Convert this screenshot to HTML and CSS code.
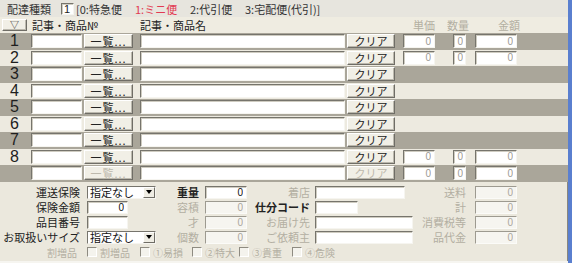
FILE: index.html
```html
<!DOCTYPE html>
<html lang="ja">

<head>
  <meta charset="UTF-8">
  <meta name="viewport" content="width=device-width, initial-scale=1.0">
  <title>配達明細</title>
  <link rel="stylesheet" href="styles.css">
</head>

<body>
  <div class="form">
    <!-- 配達種類 -->
    <div class="type-bar">
      <span class="type-label">配達種類</span>
      <input class="field type-input" value="1">
      <span class="type-opt w59">[0:特急便</span>
      <span class="type-opt w55 red">1:ミニ便</span>
      <span class="type-opt w55">2:代引便</span>
      <span class="type-opt">3:宅配便(代引)]</span>
    </div>

    <!-- 明細ヘッダ -->
    <div class="list-head">
      <button class="btn sort-btn">▽</button>
      <span class="col-code">記事・商品№</span>
      <span class="col-name">記事・商品名</span>
      <span class="col-price dim">単価</span>
      <span class="col-qty dim">数量</span>
      <span class="dim">金額</span>
    </div>

    <!-- 明細行 -->
    <div class="list">
      <div class="row dark">
        <span class="num">1</span>
        <input class="field code">
        <button class="btn btn-list">一覧...</button>
        <input class="field name">
        <button class="btn btn-clear">クリア</button>
        <input class="field zero price" value="0">
        <input class="field zero qty" value="0">
        <input class="field zero amount" value="0">
      </div>
      <div class="row">
        <span class="num">2</span>
        <input class="field code">
        <button class="btn btn-list">一覧...</button>
        <input class="field name">
        <button class="btn btn-clear">クリア</button>
        <input class="field zero price" value="0">
        <input class="field zero qty" value="0">
        <input class="field zero amount" value="0">
      </div>
      <div class="row dark">
        <span class="num">3</span>
        <input class="field code">
        <button class="btn btn-list">一覧...</button>
        <input class="field name">
        <button class="btn btn-clear">クリア</button>
      </div>
      <div class="row">
        <span class="num">4</span>
        <input class="field code">
        <button class="btn btn-list">一覧...</button>
        <input class="field name">
        <button class="btn btn-clear">クリア</button>
      </div>
      <div class="row dark">
        <span class="num">5</span>
        <input class="field code">
        <button class="btn btn-list">一覧...</button>
        <input class="field name">
        <button class="btn btn-clear">クリア</button>
      </div>
      <div class="row">
        <span class="num">6</span>
        <input class="field code">
        <button class="btn btn-list">一覧...</button>
        <input class="field name">
        <button class="btn btn-clear">クリア</button>
      </div>
      <div class="row dark">
        <span class="num">7</span>
        <input class="field code">
        <button class="btn btn-list">一覧...</button>
        <input class="field name">
        <button class="btn btn-clear">クリア</button>
      </div>
      <div class="row">
        <span class="num">8</span>
        <input class="field code">
        <button class="btn btn-list">一覧...</button>
        <input class="field name">
        <button class="btn btn-clear">クリア</button>
        <input class="field zero price" value="0">
        <input class="field zero qty" value="0">
        <input class="field zero amount" value="0">
      </div>
      <!-- 新規行 -->
      <div class="row dark">
        <span class="num"></span>
        <input class="field code">
        <button class="btn btn-list" disabled>一覧...</button>
        <input class="field name">
        <button class="btn btn-clear" disabled>クリア</button>
        <input class="field zero price" value="0">
        <input class="field zero qty" value="0">
        <input class="field zero amount" value="0">
      </div>
    </div>

    <!-- 集計・配送情報 -->
    <div class="summary">
      <span class="lbl">運送保険</span>
      <span class="ctl c1">
        <span class="select"><span class="select-text">指定なし</span><span class="select-arrow"></span></span>
      </span>
      <span class="lbl bold">重量</span>
      <span class="ctl c2"><input class="field sm w42 num-dark" value="0"></span>
      <span class="lbl dim">着店</span>
      <span class="ctl c3"><input class="field sm w90"></span>
      <span class="lbl dim">送料</span>
      <span class="ctl c4"><input class="field sm w42 off" value="0"></span>

      <span class="lbl">保険金額</span>
      <span class="ctl c1"><input class="field sm w41 num-dark" value="0"></span>
      <span class="lbl dim">容積</span>
      <span class="ctl c2"><input class="field sm w42 off" value="0"></span>
      <span class="lbl bold">仕分コード</span>
      <span class="ctl c3"><input class="field sm w43"></span>
      <span class="lbl dim">計</span>
      <span class="ctl c4"><input class="field sm w42 off" value="0"></span>

      <span class="lbl">品目番号</span>
      <span class="ctl c1"><input class="field sm w41"></span>
      <span class="lbl dim">才</span>
      <span class="ctl c2"><input class="field sm w42 off" value="0"></span>
      <span class="lbl dim">お届け先</span>
      <span class="ctl c3"><input class="field sm w98"></span>
      <span class="lbl dim">消費税等</span>
      <span class="ctl c4"><input class="field sm w42 off" value="0"></span>

      <span class="lbl">お取扱いサイズ</span>
      <span class="ctl c1">
        <span class="select"><span class="select-text">指定なし</span><span class="select-arrow"></span></span>
      </span>
      <span class="lbl dim">個数</span>
      <span class="ctl c2"><input class="field sm w42 off" value="0"></span>
      <span class="lbl dim">ご依頼主</span>
      <span class="ctl c3"><input class="field sm w98"></span>
      <span class="lbl dim">品代金</span>
      <span class="ctl c4"><input class="field sm w42 off" value="0"></span>

      <!-- 割増品チェック -->
      <div class="extras">
        <span class="extras-label">割増品</span>
        <label class="opt w53"><span class="check"></span>割増品</label>
        <label class="opt w52"><span class="check"></span>①易損</label>
        <label class="opt w47"><span class="check"></span>②特大</label>
        <label class="opt w53"><span class="check"></span>③貴重</label>
        <label class="opt"><span class="check"></span>④危険</label>
      </div>
    </div>
  </div>
</body>

</html>
```

FILE: styles.css
```css
/* Reset */
* {
  margin: 0;
  padding: 0;
  box-sizing: border-box;
}

:root {
  --row-dark: #aaa69a;
  --row-light: #edeae0;
  --panel: #ebe8dd;
  --dim-text: #b3afa2;
  --sunken-dark: #76746c;
  --sunken-light: #f6f5f0;
}

body {
  font-family: "Noto Sans CJK JP", "Noto Sans", sans-serif;
  font-size: 11px;
  color: #222;
  background: var(--panel);
  overflow: hidden;
}

/* Window frame */
.form {
  width: 572px;
  height: 263px;
  display: flex;
  flex-direction: column;
  background: var(--panel);
  border-right: 4px solid #5a7fcf;
  box-shadow: inset -1px 0 0 #8a877d;
  overflow: hidden;
}

.dim {
  color: var(--dim-text);
}

.bold {
  font-weight: bold;
}

/* Inputs and buttons */
.field {
  height: 14px;
  padding: 0 3px;
  border: 1px solid;
  border-color: var(--sunken-dark) var(--sunken-light) var(--sunken-light) var(--sunken-dark);
  box-shadow: inset 1px 1px 0 #cfccc1;
  background: #fff;
  font: 10px "Liberation Sans", sans-serif;
  color: #222;
  outline: none;
}

.btn {
  height: 14px;
  padding: 0;
  border: 1px solid;
  border-color: #fff #6f6d66 #6f6d66 #fff;
  box-shadow: inset -1px -1px 0 #bcb9ae;
  background: #f1efe6;
  font-family: "Noto Sans CJK JP", sans-serif;
  font-size: 11px;
  line-height: 12px;
  color: #222;
}

.btn:disabled {
  color: #bdb9ad;
}

/* Delivery type bar */
.type-bar {
  height: 17px;
  display: flex;
  align-items: center;
  padding-left: 7px;
  background: #e7e5de;
  color: #333;
}

.type-label {
  width: 54px;
}

.type-input {
  width: 13px;
  height: 12px;
  padding: 0 0 0 2px;
  margin-right: 2px;
  text-align: left;
  font-size: 11px;
}

.w59 { width: 59px; }
.w55 { width: 55px; }

.red {
  color: #e23a52;
}

/* List header */
.list-head {
  height: 16px;
  display: flex;
  align-items: center;
  background: #efece1;
}

.sort-btn {
  width: 25px;
  height: 12px;
  margin: 0 5px 0 2px;
  font-size: 9px;
  line-height: 10px;
}

.col-code { width: 108px; }
.col-name { width: 273px; }
.col-price { width: 34px; }
.col-qty { width: 51px; }

/* List rows */
.row {
  height: 16.5px;
  display: flex;
  align-items: center;
  background: var(--row-light);
}

.row.dark {
  background: var(--row-dark);
}

.num {
  width: 31px;
  padding-left: 10px;
  font: 16px/16px "Liberation Sans", sans-serif;
  color: #1e1e1e;
}

.code { width: 51px; margin-right: 2px; }
.btn-list { width: 49px; margin-right: 7px; letter-spacing: 1px; }
.name { width: 205px; margin-right: 2px; }
.btn-clear { width: 48px; margin-right: 8px; }
.price { width: 32px; margin-right: 18px; }
.qty { width: 13px; margin-right: 9px; padding: 0 2px; }
.amount { width: 42px; }

.zero {
  text-align: right;
  color: #9c9a94;
}

/* Summary panel */
.summary {
  flex: 1;
  display: grid;
  grid-template-columns: 80px 80px 39px 53px 58px 105px 51px 1fr;
  grid-auto-rows: 15px;
  align-items: center;
  padding-top: 3px;
  border-bottom: 2px solid #f6f5f0;
}

.lbl {
  text-align: right;
  white-space: nowrap;
  line-height: 15px;
}

.ctl {
  display: flex;
  align-items: center;
}

.c1 { padding-left: 7px; }
.c2 { padding-left: 6px; }
.c3 { padding-left: 5px; }
.c4 { padding-left: 9px; }

.sm {
  height: 13px;
  text-align: right;
}

.w41 { width: 41px; }
.w42 { width: 42px; }
.w43 { width: 43px; }
.w90 { width: 90px; }
.w98 { width: 98px; }

.num-dark {
  color: #111;
}

.off {
  background: #f6f5f0;
  border-color: #9d9a90 #fbfbf8 #fbfbf8 #9d9a90;
  box-shadow: none;
  color: #aaa79d;
}

/* Dropdown */
.select {
  width: 69px;
  height: 13px;
  display: flex;
  align-items: center;
  padding-left: 2px;
  background: #fff;
  border: 1px solid;
  border-color: var(--sunken-dark) var(--sunken-light) var(--sunken-light) var(--sunken-dark);
}

.select-text {
  flex: 1;
  line-height: 11px;
  color: #111;
}

.select-arrow {
  width: 12px;
  height: 11px;
  display: flex;
  align-items: center;
  justify-content: center;
  background: #efede4;
  border: 1px solid;
  border-color: #fff #6f6d66 #6f6d66 #fff;
}

.select-arrow::after {
  content: "";
  border-left: 3px solid transparent;
  border-right: 3px solid transparent;
  border-top: 4px solid #000;
}

/* Surcharge checkboxes */
.extras {
  grid-column: 1 / -1;
  display: flex;
  align-items: center;
  font-size: 10px;
  color: var(--dim-text);
}

.extras-label {
  width: 77px;
  margin-right: 10px;
  text-align: right;
}

.opt {
  display: flex;
  align-items: center;
  gap: 3px;
}

.w53 { width: 53px; }
.w52 { width: 52px; }
.w47 { width: 47px; }

.check {
  width: 10px;
  height: 10px;
  border: 1px solid;
  border-color: #8e8b81 #fff #fff #8e8b81;
  background: #f4f3ed;
}
```
